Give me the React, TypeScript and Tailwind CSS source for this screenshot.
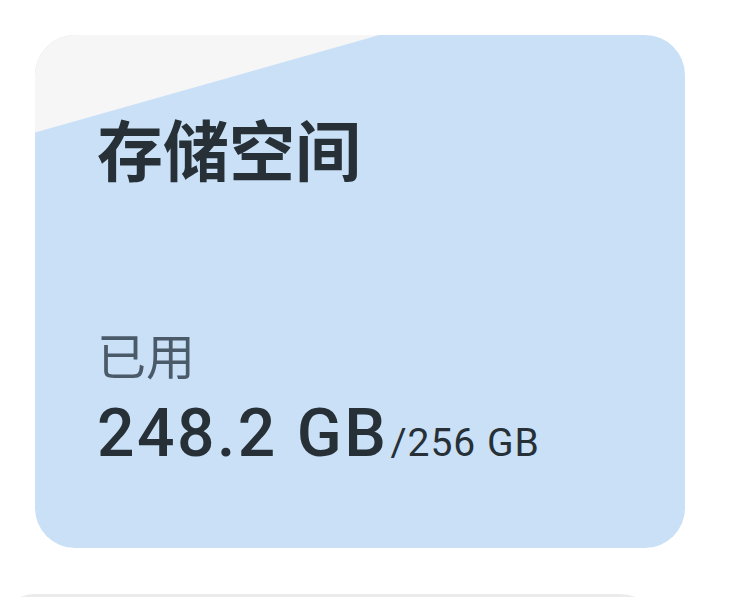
export default function App() {
  return (
    <div className="h-[597px] w-[731px] overflow-hidden bg-white pt-[35px] font-['Roboto','Noto_Sans_CJK_SC',sans-serif]">
      <div className="relative ml-[35px] h-[513px] w-[650px] overflow-hidden rounded-[40px] bg-[#c9e0f7]">
        <div className="absolute inset-0 bg-[#f6f6f6] [clip-path:polygon(0_0,53%_0,0_19%)]" />
        <div className="relative flex h-full flex-col px-[62px] pt-[76px]">
          <h1 className="text-[66px] font-semibold leading-[72px] text-[#263036] font-['Noto_Sans_CJK_SC',sans-serif]">
            存储空间
          </h1>
          <div className="mt-[143px] text-[49px] leading-[56px] text-[#4b5a69] font-['Noto_Sans_CJK_SC',sans-serif]">
            已用
          </div>
          <div className="mt-[14px] flex items-baseline text-[#263036]">
            <span className="text-[66px] font-medium leading-[76px] tracking-[2.5px]">248.2 GB</span>
            <span className="ml-[2px] text-[39px] font-normal tracking-[1px]">/256 GB</span>
          </div>
        </div>
      </div>
      <div className="-ml-[5px] mt-[46px] h-[80px] w-[665px] rounded-[40px] bg-[#ebebeb]" />
    </div>
  );
}
